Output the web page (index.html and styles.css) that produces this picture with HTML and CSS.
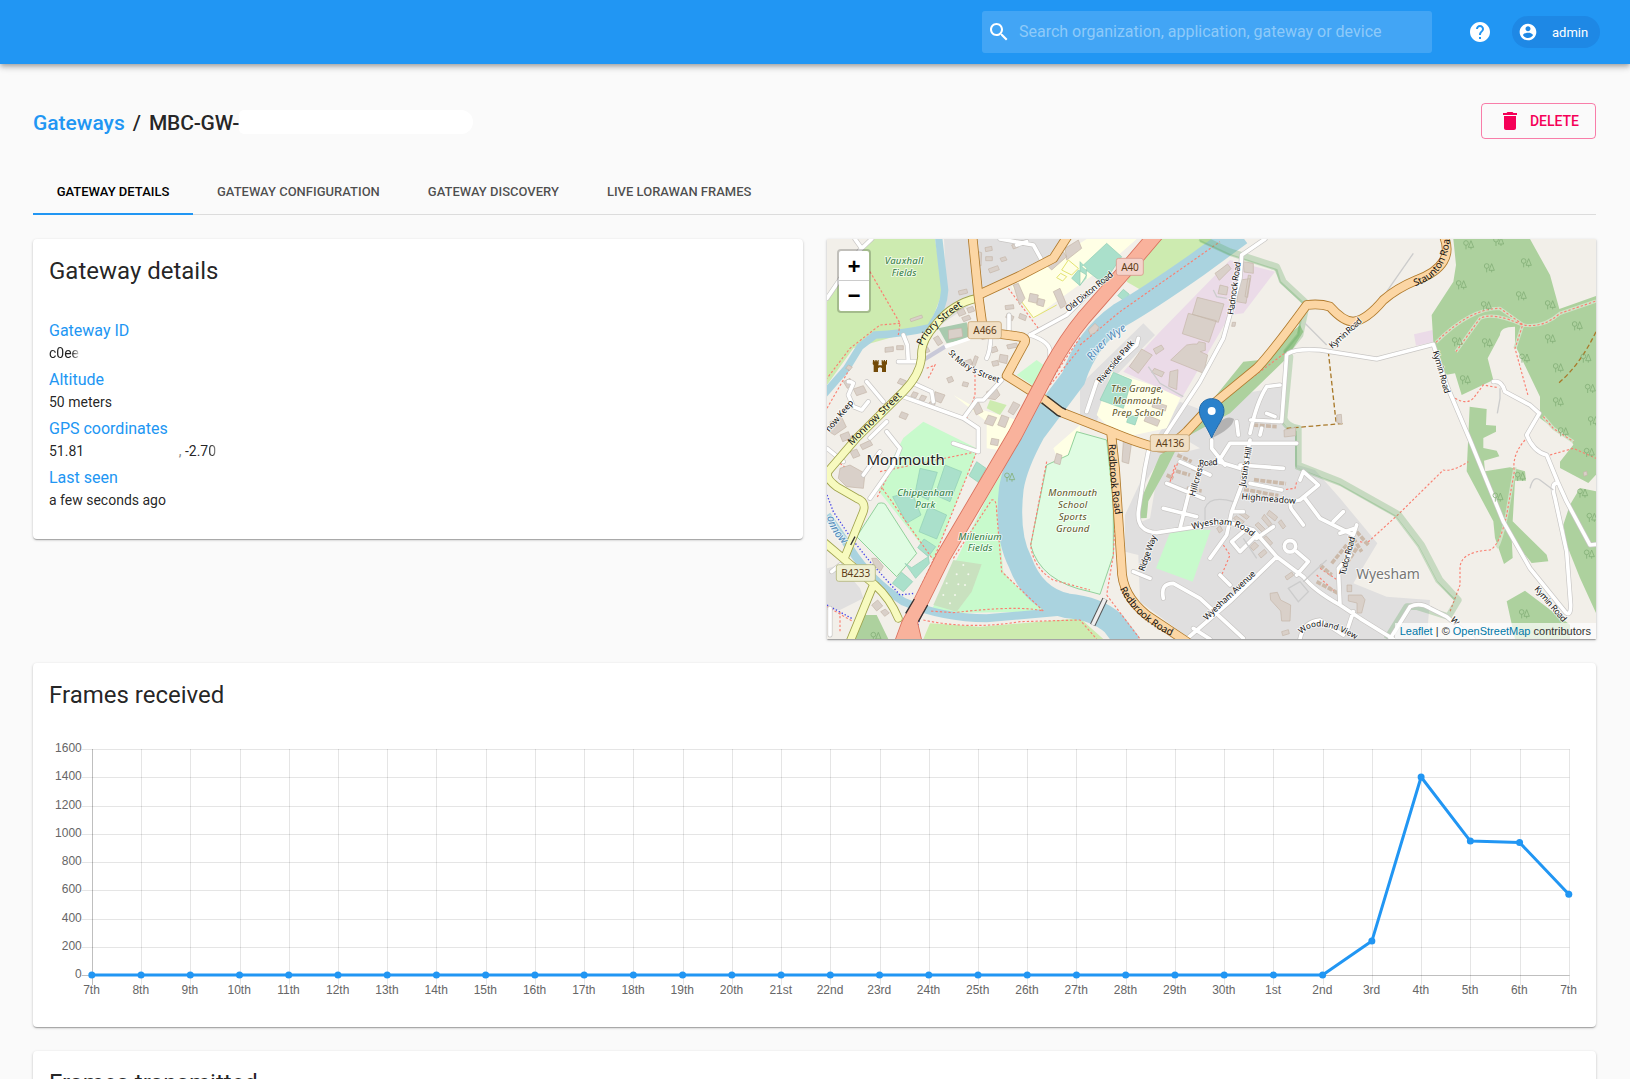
FILE: index.html
```html
<!DOCTYPE html>
<html lang="en">
<head>
<meta charset="utf-8">
<title>Gateway details</title>
<link rel="stylesheet" href="styles.css">
</head>
<body>
<header class="appbar">
  <div class="search">
    <svg class="icon" viewBox="0 0 24 24"><path d="M15.5 14h-.79l-.28-.27C15.41 12.59 16 11.11 16 9.5 16 5.91 13.09 3 9.5 3S3 5.91 3 9.5 5.91 16 9.5 16c1.61 0 3.09-.59 4.23-1.57l.27.28v.79l5 4.99L20.49 19l-4.99-5zm-6 0C7.01 14 5 11.99 5 9.5S7.01 5 9.5 5 14 7.01 14 9.5 11.99 14 9.5 14z"/></svg>
    <span class="search-hint">Search organization, application, gateway or device</span>
  </div>
  <svg class="icon help" viewBox="0 0 24 24"><path d="M12 2C6.48 2 2 6.48 2 12s4.48 10 10 10 10-4.48 10-10S17.52 2 12 2zm1 17h-2v-2h2v2zm2.07-7.75l-.9.92C13.45 12.9 13 13.5 13 15h-2v-.5c0-1.1.45-2.1 1.17-2.83l1.24-1.26c.37-.36.59-.86.59-1.41 0-1.1-.9-2-2-2s-2 .9-2 2H8c0-2.21 1.79-4 4-4s4 1.79 4 4c0 .88-.36 1.68-.93 2.25z"/></svg>
  <div class="chip">
    <svg class="avatar" viewBox="0 0 24 24"><path d="M12 2C6.48 2 2 6.48 2 12s4.48 10 10 10 10-4.48 10-10S17.52 2 12 2zm0 3c1.66 0 3 1.34 3 3s-1.34 3-3 3-3-1.34-3-3 1.34-3 3-3zm0 14.2c-2.5 0-4.71-1.28-6-3.22.03-1.99 4-3.08 6-3.08 1.99 0 5.97 1.09 6 3.08-1.29 1.94-3.5 3.22-6 3.22z"/></svg>
    <span>admin</span>
  </div>
</header>

<main class="page">
  <div class="titlebar">
    <h1 class="breadcrumb"><a class="crumb-link">Gateways</a><span class="crumb-sep">/</span><span class="crumb-name">MBC-GW-</span><span class="redacted"></span></h1>
    <button class="delete"><svg class="icon" viewBox="0 0 24 24"><path d="M6 19c0 1.1.9 2 2 2h8c1.1 0 2-.9 2-2V7H6v12zM19 4h-3.500l-1-1h-5l-1 1H5v2h14V4z"/></svg><span>DELETE</span></button>
  </div>

  <nav class="tabs">
    <a class="tab active">GATEWAY DETAILS</a>
    <a class="tab">GATEWAY CONFIGURATION</a>
    <a class="tab">GATEWAY DISCOVERY</a>
    <a class="tab">LIVE LORAWAN FRAMES</a>
  </nav>

  <div class="columns">
    <section class="card details">
      <h2 class="card-title">Gateway details</h2>
      <dl class="facts">
        <dt>Gateway ID</dt><dd><span class="cut">c0ee</span></dd>
        <dt>Altitude</dt><dd>50 meters</dd>
        <dt>GPS coordinates</dt><dd>51.81<span class="gap"></span><span class="faint">,</span> -2.7<span class="cut-digit">0</span></dd>
        <dt>Last seen</dt><dd>a few seconds ago</dd>
      </dl>
    </section>

    <section class="card map">
      <svg class="map-canvas" viewBox="21 12 2307 1200">
        <defs>
          <g id="trees" fill="none" stroke="#84b078" stroke-width="2.500"><circle cx="8" cy="9" r="7"/><path d="M8 16V28M23 2L15 22H31ZM23 22V28"/></g>
          <path id="priory" d="M307 333Q325 285 425 215"/>
          <path id="monnow-st" d="M95 632L245 485"/>
          <path id="stmary" d="M384 353Q430 415 560 450"/>
          <path id="wye" d="M816 378Q855 318 960 262"/>
          <path id="monnow-r" d="M21 845Q30 900 90 945"/>
          <path id="redbrook1" d="M866 627Q870 760 890 860"/>
          <path id="redbrook2" d="M899 1062Q950 1160 1066 1208"/>
          <path id="staunton" d="M1785 154Q1890 120 1890 -10"/>
          <path id="wyesham-rd" d="M1118 884Q1230 845 1294 904"/>
          <path id="woodland" d="M1444 1198Q1490 1145 1604 1212"/>
          <path id="highmeadow" d="M1264 793L1440 808"/>
        </defs>

        <g class="land">
          <path fill="#e0dfdf" d="M372 12H745L690 70L480 190L330 290L380 180ZM970 265L1005 300L870 440L830 560L780 540V450ZM21 1000L60 990L120 1060L130 1090L60 1125H21ZM21 200L70 60L21 60ZM1080 500L1160 530L1300 470L1390 455L1390 570L1430 600L1432 690L1485 705L1560 790L1672 925L1600 1045L1700 1085L1830 1095L1820 1212H1110L960 1100L955 960L915 950L915 840L980 700L1000 620Z"/>
          <path fill="#f2efe9" d="M1020 670L990 850L960 862L965 760ZM1020 600L1090 610L1140 640L1080 655Z"/>
          <path fill="#cdebb0" d="M155 12H345L370 165L330 270L240 300L100 340L21 450V195L60 120ZM975 12H1205L985 178L920 140ZM330 1165L480 1175L780 1150L850 1212H310ZM510 495L560 510L540 540L500 520Z"/>
          <path fill="#f2efe9" d="M21 12H150L110 70L60 125L21 200Z"/>
          <path fill="#c8facc" d="M250 609L310 560L470 640L465 665L340 975L170 760ZM545 715L540 900L550 1010Q600 1070 680 1130L330 1135L500 790ZM590 420L650 375L670 390L645 455ZM1055 880L1172 885L1118 1040L1008 1000ZM265 615L290 580L420 620L380 650Z"/>
          <path fill="#ffffe5" d="M575 155L800 12H950L850 100L790 140L640 250ZM875 410L1085 480L1040 580L900 609L830 540ZM400 480L470 520L610 560L570 650L500 640L500 560ZM700 640L780 570V609L720 690ZM262 1200L290 1190L300 1212H262Z"/>
          <path fill="#ebdbe8" d="M1230 75L1365 110L1270 235L1230 240L1085 490L910 410L1020 290ZM1782 298L1838 285L1845 320L1788 332Z"/>
          <path fill="#dffce2" stroke="#7fc98b" stroke-width="2.500" d="M175 805Q195 800 200 815L290 955L230 1025L110 905ZM770 590L745 660L680 690L632 930Q660 1040 810 1070L840 1078L880 960V800L860 615Z"/>
          <path fill="#add19e" d="M1900 12H2130L2190 120L2218 222L2328 183V680L2250 615L2160 550V485L2085 330V275Q2040 275 2040 300L2003 370L2020 435L1925 480L1905 415L1875 420L1840 320L1835 240L1900 140L1908 90ZM1949 515L2000 522L1998 570L2028 572V590L1990 609V639L2030 647L2038 664L1992 677L1995 709L2070 697L2115 709L2118 737H2085L2078 859L2180 959L2185 979L2135 984L2075 909L2078 969L2052 987L2025 909L2020 859L1940 709ZM2115 1067L2250 1169V1212H2085L2060 1099ZM2250 609L2328 670V719L2305 744L2220 699V680L2260 629ZM2280 759L2328 769V1134L2280 1029L2240 929L2230 869L2250 809ZM1050 640L1020 660L965 789L960 850L980 849L985 799L1040 700L1070 640ZM1250 405L1270 380L1320 375L1440 270L1450 290L1400 370L1230 535L1110 600L1100 590ZM110 1190L130 1140H170L205 1212H105Z"/>
          <path fill="#a9caae" d="M355 280L440 262L450 310L380 325Z"/>
          <path fill="#c9e1bf" d="M400 975L485 988L455 1070L410 1130L340 1110Z"/>
          <path class="pitch" d="M300 700L352 712L325 795L285 775ZM375 690L425 710L390 800L345 780ZM218 785L275 770L303 840L260 865ZM325 815L380 840L350 912L297 890ZM470 680L498 700L475 742L447 722ZM312 912L347 935L325 965L293 938ZM255 985L275 998L325 965L328 985L287 1030ZM245 1012L278 1040L250 1070L217 1045ZM775 105L800 120L780 152L755 130ZM860 25L905 65L850 145L785 95ZM800 100L780 80V150L798 130ZM880 412L935 435L910 520L840 495ZM910 163L928 178L912 197L893 182ZM925 545L955 540L945 570L920 562Z"/>
          <path fill="none" stroke="#e3e36f" stroke-width="3" d="M725 105L745 75L775 100L755 120ZM722 115L740 125L728 138L710 128ZM590 180L640 248L710 210"/>
        </g>

        <g class="water">
          <path stroke-width="22" d="M355 0L374 165Q372 220 330 278Q240 298 165 300L120 335L80 400L10 480"/>
          <path stroke-width="24" d="M21 840L90 940Q150 1035 250 1100Q370 1150 500 1150L720 1130"/>
          <path stroke-width="74" d="M1260 -5L1130 90Q980 195 900 240Q800 310 760 430L640 590Q585 690 574 760Q558 900 600 980Q640 1090 740 1112Q830 1120 880 1165L930 1230"/>
        </g>

        <g class="paths">
          <path d="M150 110L240 265L235 300M240 265L180 270L90 340L21 430M21 520L90 400M565 160L655 280L630 300M780 330L900 230L1200 20M690 450L780 340M780 308L690 440M465 420V480L440 550M180 750L340 975M180 710L470 650L340 975L300 1060M210 710L170 790M400 970L515 795Q530 790 530 830L545 1010L670 1128Q600 1110 400 1133L330 1128M310 1155Q450 1185 600 1160L780 1155L830 1212M680 680L632 930Q640 1000 700 1035L810 1065M885 860L880 960L860 1080M860 1080L960 1212M60 1130V1190M21 1115L100 1160M60 685L130 740M320 400L345 390L325 430M1200 500L1400 350M1065 690L1050 740L1075 680M1210 930L1230 960L1205 1020M1385 765L1425 760L1430 740M1490 1020L1550 1075M1500 1000L1560 1040M1620 920L1640 925L1735 838L1870 705Q1900 710 1945 680"/>
          <path class="halo" d="M1848 322Q1950 220 2040 220L2110 270Q2170 280 2220 235L2328 198M1908 350L1980 250Q2020 230 2108 270L2085 340M2085 697L2060 840Q2040 930 2030 937M2170 545L2200 580L2260 620"/>
          <path d="M1848 322Q1950 220 2040 220L2110 270Q2170 280 2220 235L2328 198M1908 350L1980 250Q2020 230 2108 270L2085 340L2125 485M1905 490Q1940 510 1960 490L1990 450L2035 458M2115 615Q2075 660 2083 710L2060 840Q2040 930 2010 945Q1920 950 1920 1000V1050L1890 1130M2190 660L2260 640L2328 670M2170 545L2200 580L2260 620"/>
        </g>
        <g class="boundary">
          <path stroke-width="20" d="M1140 8L1230 50L1370 95L1390 140L1460 205L1440 300L1400 350L1410 365L1392 550Q1400 575 1435 580V690L1560 740L1735 838L1805 930L1860 1035L1915 1095L1885 1145L1790 1115H1760L1700 1212"/>
          <path stroke-width="6" d="M1140 18L1230 60L1370 105L1380 140L1450 205L1435 300L1395 350L1400 365L1382 550Q1390 585 1428 590V700L1560 750L1725 843L1795 935L1850 1040L1905 1095"/>
        </g>
        <path fill="none" stroke="#a9792a" stroke-width="4" stroke-dasharray="14 8" d="M1525 350L1548 560M1400 580L1575 565M2328 290Q2280 390 2215 445"/>
        <path fill="none" stroke="#4242e8" stroke-width="4" stroke-dasharray="4 6" d="M21 780L40 830L90 905L150 980L240 1080L285 1075M21 1110L95 1150M290 1180L300 1150"/>

        <path class="building" d="M475 50l10 3-2 40-10-3ZM495 38l20-4 2 12-20 4ZM497 65l20 0v12l-20 0ZM540 70l16-5 5 10-16 5ZM575 30l16-6 5 12-16 6ZM415 168l25-6 3 12-25 6ZM505 102l28-10 5 12-28 10ZM270 252l35-12 3 8-35 12ZM580 150l15-5 20 45-16 20ZM700 170l20-10 20 50-18 10ZM630 175l25 5-5 25-25-6ZM655 190l20 5-5 20-20-6ZM680 90l50-40 10 15-45 40ZM735 40l40-25 10 25-45 35ZM562 235l20 10-5 12-20-10ZM555 212l25-3 2 12-25 3ZM600 235l20 8-4 14-20-8ZM410 228l20-8 8 16-20 8ZM440 220l18-6 6 14-18 6ZM425 248l22-8 6 12-22 8ZM195 338l25-3v14l-25 3ZM230 332l20 0v12l-20 0ZM340 310l14-8 14 22-14 8ZM385 285l40-6 3 26-42 8ZM310 340l12-5 8 14-12 5ZM430 380l22-8 6 14-22 8ZM465 362l10 4-10 28-10-4ZM510 340l18-6 6 14-18 6ZM540 358l24 4-4 24-24-6ZM515 380l18-4 4 14-18 4ZM560 330l30-6 4 12-30 6ZM480 300l20-5 6 14-20 5ZM85 390l12 6-8 10-12-6ZM70 440l20-10 12 20-20 10ZM100 462l30-10 10 20-30 10ZM30 560l35-14 14 30-35 24-14-8ZM245 530l20 8-8 16-20-8ZM60 600l25-10 8 20-25 10ZM280 470l15 5-8 14-15-5ZM305 480l15 5-8 14-15-5ZM330 500l16 6-8 12-16-6ZM345 470l30 10-12 24-20-8ZM455 510l20-10 14 30-20 10ZM500 470l28-12 12 22-14 14-26-4ZM505 540l25 8-12 25-25-8ZM545 540l22 8-12 30-22-8ZM580 500l20 10-20 30-16-10ZM380 430l15-6 6 14-15 6ZM430 440l16 4-4 12-16-4ZM240 430l20 8-8 14-20-8ZM60 700l30-10 45 25-5 45-50-5-25-25ZM90 650l20-8 10 20-20 8ZM120 630l30-14 8 14-30 14ZM155 970l15 0 20 24-8 14-18-14ZM155 1110l18-15 15 18-18 15ZM182 1130l14-8 12 12-14 10ZM710 655l16 6-6 28-18-6ZM515 610l22 4-4 18-22-4ZM1185 115l38-28 10 14-35 35ZM1270 80l30 5 0 30-28-4ZM1260 135l30-4-12 74-28-5ZM1285 120l8 2-10 65-8-2ZM1200 150l24 6-4 24-26-4ZM1132 187l80 20-17 55-78-24ZM1105 235l84 22-22 65-80-26ZM1100 330l20-3 12 0 4-7 20 4 0 22-15 4 22 10-12 55-99-40ZM965 342l32 18-42 55-27-20ZM1000 342l24-12 8 12-24 16ZM1003 400l30 12-8 14-30-14ZM1050 410l24-6-4 60-24-10ZM805 285l20-20 12 12-10 15-16 8ZM1237 262l10 0-2 12-10 0ZM980 540l40 16-8 18-40-16ZM1000 500l40 12-4 16-40-12ZM910 620l24 8-8 58-20-6ZM1392 585l35-8 0 25-34 4ZM1350 1075L1372 1072L1382 1095L1412 1110L1410 1158H1385L1382 1128L1352 1095ZM1550 540l14-2 2 30-16-6ZM2290 712l10-4 2 12-10 4ZM1585 1080l40 0 10 14-10 40-14 0 0-30-26-6ZM1581 1050l14 0 0 20-14 0ZM1395 1025l20-14 6 10-20 14ZM1385 1190l20-6 3 12-20 6ZM1340 838l8-12 25 20-8 12ZM1325 850l8-12 22 28-8 10ZM1305 870l10-8 24 24-8 10ZM1240 850l8-8 25 18-8 8ZM1255 835l8-8 25 18-8 8ZM1375 862l8-8 14 20-8 8ZM1330 910l8-8 20 22-8 8ZM1290 935l14-14 12 12-16 14ZM1315 958l18-15 8 10-18 16ZM1190 880l10-8 8 14-10 8Z"/>
        <path class="terraces" d="M1302 734L1398 746M1272 763L1375 782M1072 660L1115 680M1068 708L1110 720M1115 700L1145 710M1100 760L1145 768M1040 720L1060 730M1300 570L1370 575M1490 1040L1555 1075M1500 990L1535 1020M1535 985L1580 930M1570 1000L1610 940M1610 890L1645 930M1600 910L1625 950"/>

        <g class="way minor-case"><use href="#minor-roads"/></g>
        <g class="way minor"><g id="minor-roads">
          <path d="M155 12L120 45L21 190M105 12L125 40M540 12L640 30L665 75M590 30L620 20M567 240V295M630 300L740 240L810 170M630 300Q690 320 690 350V385M500 370Q510 350 512 310M235 380H300M265 380L262 330L250 300M85 440Q95 440 100 445L85 480L100 515L125 525L145 500M140 440L190 500M250 485L430 550L470 495H490L545 435M430 550L475 580V650L400 625M280 445L335 470L340 500M200 590L240 640L220 690L150 790M130 720L180 650M21 640L70 680M150 609L200 560"/>
          <path d="M1335 12L1265 60L1260 130L1210 310L1140 440L1035 600M955 310L950 330L830 440L800 530M1405 355Q1430 340 1500 345L1670 372L1840 328L1880 450L1950 615L2050 860L2130 1000L2235 1130Q2252 1148 2252 1110L2240 950L2205 790Q2190 740 2215 745L2240 800L2310 930L2330 928M2215 745L2180 660Q2140 650 2120 600L2158 535L2130 510L2055 470Q2045 435 2020 440M1400 360L1385 560M1380 450L1340 455Q1310 500 1290 595M1292 555L1380 560M1325 580L1320 600M1340 535L1365 545M1250 560L1255 600"/>
          <path d="M985 650L975 700L955 830Q950 890 1010 893L1130 875L1220 860L1300 885L1370 965L1450 1025Q1480 1065 1560 1110M1215 690L1175 640V615M1195 680L1230 625H1430M1195 680L1260 700M1260 690L1390 700M1290 615L1265 750L1235 830L1220 900L1170 970M1080 680L1170 720M1040 745L1150 790M1110 760L1080 880M1030 820L1130 845M1290 745L1385 765M1240 830L1270 830M1450 710L1440 735M1450 710L1495 750L1440 795Q1395 800 1420 830L1450 870M1455 790L1500 850M1270 890L1235 920L1260 950L1310 900M1310 910L1360 875M1370 965L1230 1100L1100 1212M1430 950L1465 980L1430 1020M1200 1020L1230 1050M1030 1090Q1020 1045 1060 1045L1140 1090L1270 1210M940 1010L990 1030M1500 850L1560 880L1600 900L1610 870M1540 860L1570 830M1560 1110L1555 1000L1590 960M1560 1110L1620 1150L1720 1212M1600 1130L1580 1190M1710 1212L1770 1115Q1800 1100 1830 1120L1880 1145L1960 1212M1440 1212Q1450 1160 1500 1155L1570 1200M1560 895L1605 880M1120 1180L1170 1212M30 1120V1200M35 1010L60 990"/>
          <circle cx="1410" cy="934" r="17"/>
        </g></g>
        <path fill="none" stroke="#c9c9d8" stroke-width="13" d="M310 375L375 335"/>
        <path fill="none" stroke="#fff" stroke-width="11" d="M375 335L450 310"/>
        <path fill="none" stroke="#ccc" stroke-width="4" d="M1155 860V820Q1170 780 1240 800M1780 55L1700 170M2130 760Q2140 720 2160 735L2200 765M2040 460V490L2032 535M1455 265L1520 330M985 395L1020 445L1090 485M1180 165L1190 185L1220 190M1405 1060L1440 1040L1465 1070L1435 1100ZM1270 910L1310 970M1450 1040L1520 975"/>

        <g class="way tertiary-case"><use href="#tertiary"/></g>
        <g class="way tertiary"><path id="tertiary" d="M470 190Q400 205 350 265Q300 320 305 365Q300 420 250 470L110 609L28 705Q10 725 50 755L110 790Q140 800 130 830L75 965M10 920L75 975L165 1050Q210 1090 235 1150M160 1050L90 1220"/></g>
        <g class="way primary-case"><use href="#primary"/></g>
        <g class="way primary"><path id="primary" d="M457 0L475 180L490 290L600 305Q625 310 610 330L560 422L660 485L720 530L860 585Q990 640 1030 638Q1070 620 1100 590L1170 515L1310 400Q1350 360 1460 210Q1500 205 1530 215Q1570 260 1600 260Q1640 255 1690 195Q1730 160 1790 135Q1910 90 1870 0M475 180L600 122L700 70L745 0M873 590L885 700L905 1000Q905 1080 980 1140L1100 1220"/></g>
        <g class="way trunk-case"><use href="#trunk"/></g>
        <g class="way trunk"><path id="trunk" d="M1015 -10L930 90L790 250Q740 310 690 400L585 600L370 965L300 1105L265 1170L245 1225M270 1160L285 1225"/></g>
        <path fill="none" stroke="#333" stroke-width="4" d="M665 503L712 541L722 545M682 484L727 518L738 524M283 1092L257 1135M323 1110L295 1160M105 905L92 930"/>
        <path fill="none" stroke="#555" stroke-width="17" d="M818 1170L855 1092"/><path fill="none" stroke="#eee" stroke-width="11" d="M818 1170L855 1092"/>

        <g class="trees">
          <use href="#trees" x="1930" y="15"/><use href="#trees" x="2020" y="5"/><use href="#trees" x="1992" y="84"/><use href="#trees" x="2103" y="69"/><use href="#trees" x="1908" y="135"/><use href="#trees" x="2088" y="168"/><use href="#trees" x="2175" y="195"/><use href="#trees" x="1983" y="198"/><use href="#trees" x="2256" y="258"/><use href="#trees" x="2175" y="297"/><use href="#trees" x="1896" y="306"/><use href="#trees" x="1986" y="309"/><use href="#trees" x="2098" y="355"/><use href="#trees" x="2282" y="355"/><use href="#trees" x="2199" y="384"/><use href="#trees" x="1920" y="420"/><use href="#trees" x="2295" y="446"/><use href="#trees" x="2199" y="486"/><use href="#trees" x="2304" y="543"/><use href="#trees" x="2214" y="576"/><use href="#trees" x="2292" y="638"/><use href="#trees" x="2085" y="710"/><use href="#trees" x="2018" y="772"/><use href="#trees" x="2272" y="760"/><use href="#trees" x="2300" y="833"/><use href="#trees" x="2292" y="943"/><use href="#trees" x="2097" y="1122"/><use href="#trees" x="553" y="712"/><use href="#trees" x="152" y="1190"/>
        </g>
        <g fill="#f4f8ee"><circle cx="430" cy="990" r="3"/><circle cx="410" cy="1018" r="3"/><circle cx="445" cy="1018" r="3"/><circle cx="380" cy="1045" r="3"/><circle cx="415" cy="1048" r="3"/><circle cx="370" cy="1080" r="3"/><circle cx="405" cy="1080" r="3"/><circle cx="435" cy="1050" r="3"/><circle cx="390" cy="1105" r="3"/></g>
        <path fill="#734a08" d="M159 375h4v4h3v-4h4v4h3v-4h3v12l-2 4h13l-2-4v-12h3v4h3v-4h4v4h3v-4h3v12l-3 4v20h-12v-11q-6-7-12 0v11h-13v-20l-3-4Z"/>

        <g class="shields">
          <rect x="444" y="260" width="100" height="51" rx="7"/><text x="495" y="297" textLength="70">A466</text>
          <rect class="trunk-shield" x="889" y="70" width="81" height="51" rx="7"/><text x="930" y="108" textLength="53">A40</text>
          <rect x="991" y="599" width="117" height="50" rx="7"/><text x="1050" y="635" textLength="86">A4136</text>
          <rect class="b-shield" x="49" y="989" width="117" height="50" rx="7"/><text x="107" y="1026" textLength="87">B4233</text>
        </g>

        <g class="labels">
          <text class="town" x="257" y="690" textLength="235">Monmouth</text>
          <text class="suburb" x="1704" y="1032" textLength="191">Wyesham</text>
          <g class="park"><text x="252" y="87" textLength="115">Vauxhall</text><text x="252" y="122" textLength="74">Fields</text><text x="316" y="784" textLength="168">Chippenham</text><text x="316" y="819" textLength="60">Park</text><text x="480" y="914" textLength="130">Millenium</text><text x="480" y="949" textLength="74">Fields</text></g>
          <g class="school"><text x="952" y="472" textLength="158">The Grange,</text><text x="952" y="508" textLength="146">Monmouth</text><text x="953" y="544" textLength="154">Prep School</text><text x="758" y="784" textLength="146">Monmouth</text><text x="758" y="820" textLength="88">School</text><text x="758" y="856" textLength="84">Sports</text><text x="758" y="892" textLength="100">Ground</text></g>
          <g class="river"><text><textPath href="#wye">River Wye</textPath></text><text><textPath href="#monnow-r">onnow</textPath></text></g>
          <g class="street major"><text><textPath href="#priory">Priory Street</textPath></text><text><textPath href="#monnow-st">Monnow Street</textPath></text><text><textPath href="#redbrook1">Redbrook Road</textPath></text><text><textPath href="#redbrook2">Redbrook Road</textPath></text><text><textPath href="#staunton">Staunton Road</textPath></text></g>
          <g class="street"><text class="tight"><textPath href="#stmary">St Mary's Street</textPath></text><text><textPath href="#wyesham-rd">Wyesham Road</textPath></text><text class="tight"><textPath href="#woodland">Woodland View</textPath></text><text><textPath href="#highmeadow">Highmeadow</textPath></text>
            <text transform="translate(745 232) rotate(-39)" textLength="175">Old Dixton Road</text>
            <text transform="translate(842 446) rotate(-50)" textLength="158">Riverside Park</text>
            <text transform="translate(1240 240) rotate(-82)" textLength="160">Hadnock Road</text>
            <text transform="translate(1537 342) rotate(-42)" textLength="122">Kymin Road</text>
            <text transform="translate(1838 350) rotate(74)" textLength="132">Kymin Road</text>
            <text transform="translate(2142 1063) rotate(49)" textLength="132">Kymin Road</text>
            <text transform="translate(28 592) rotate(-50)" textLength="115">now Keep</text>
            <text transform="translate(1124 785) rotate(-74)" textLength="97">Hillcrest</text>
            <text transform="translate(1138 694) rotate(-5)" textLength="56">Road</text>
            <text transform="translate(1275 755) rotate(-80)" textLength="120">Justin's Hill</text>
            <text transform="translate(972 1010) rotate(-70)" textLength="112">Ridge Way</text>
            <text transform="translate(1160 1157) rotate(-43)" textLength="203">Wyesham Avenue</text>
            <text transform="translate(1575 1022) rotate(-75)" textLength="118">Tudor Road</text>
            <text transform="translate(1890 1155) rotate(50)">W</text>
          </g>
        </g>
        <path fill="#000" opacity=".2" d="M1178 608L1200 560Q1225 540 1242 552Q1238 580 1178 608Z"/>
        <path fill="#2a81cb" stroke="#2268a5" stroke-width="3" d="M1175 491C1152 491 1138 508 1138 528C1138 550 1157 568 1175 609C1193 568 1212 550 1212 528C1212 508 1198 491 1175 491Z"/>
        <circle cx="1175" cy="528" r="12" fill="#fff"/>
      </svg>
      <div class="zoom"><span>+</span><span>−</span></div>
      <div class="credit"><a>Leaflet</a> | © <a>OpenStreetMap</a> contributors</div>
    </section>
  </div>

  <section class="card frames">
    <h2 class="card-title">Frames received</h2>
    <svg class="chart" id="received" width="1531" height="270"></svg>
  </section>

  <section class="card frames">
    <h2 class="card-title">Frames transmitted</h2>
  </section>
</main>
<script src="chart.js"></script>
</body>
</html>
```
FILE: styles.css
```css
* { box-sizing: border-box; }
html, body { height: 1079px; overflow: hidden; }
body { margin: 0; background: #fafafa; color: rgba(0,0,0,.87); font-family: Roboto, sans-serif; font-size: 14px; }
h1, h2, dl, dd { margin: 0; }

.icon { width: 24px; height: 24px; fill: currentColor; flex: none; }

.appbar { position: relative; display: flex; align-items: center; justify-content: flex-end; height: 64px; padding-right: 30px; background: #2196f3; color: #fff; box-shadow: 0 2px 4px -1px rgba(0,0,0,.2), 0 4px 5px 0 rgba(0,0,0,.14), 0 1px 10px 0 rgba(0,0,0,.12); }
.search { display: flex; align-items: center; width: 450px; height: 42px; padding-left: 5px; border-radius: 3px; background: #42a5f5; }
.search-hint { margin-left: 8px; padding-bottom: 2px; font-size: 16px; color: #8ecaf9; white-space: nowrap; }
.help { margin: 0 20px 0 36px; }
.chip { display: flex; align-items: center; width: 88px; height: 32px; padding-left: 5.5px; border-radius: 16px; background: #1e88e5; font-size: 13px; }
.avatar { width: 20px; height: 20px; margin-right: 14.5px; fill: #fff; }

.page { padding: 39px 34px 0 33px; }
.titlebar { display: flex; justify-content: space-between; height: 64px; }
.breadcrumb { display: flex; align-items: center; height: 39px; font-size: 21px; font-weight: 500; }
.crumb-link { color: #2196f3; }
.crumb-sep { margin: 0 8px; }
.crumb-name { letter-spacing: -.2px; }
.redacted { width: 234px; height: 24px; margin-top: -2px; border-radius: 5px 12px 12px 5px; background: #fff; }
.delete { display: flex; align-items: center; justify-content: center; width: 115px; height: 36px; padding: 0; border: 1px solid rgba(245,0,87,.5); border-radius: 4px; background: none; color: #f50057; font: 500 14px Roboto, sans-serif; gap: 8px; }

.tabs { display: flex; height: 48px; border-bottom: 1px solid #dcdcdc; }
.tab { display: flex; align-items: center; justify-content: center; height: 48px; padding: 1px 24px 0; font-size: 13px; font-weight: 500; color: rgba(0,0,0,.7); white-space: nowrap; }
.tab.active { width: 160px; padding: 3px 0 0; color: #000; border-bottom: 2px solid #2196f3; }

.columns { display: grid; grid-template-columns: 770px 769px; gap: 24px; align-items: start; margin-top: 24px; }
.card { border-radius: 4px; background: #fff; box-shadow: 0 1px 3px 0 rgba(0,0,0,.2), 0 1px 1px 0 rgba(0,0,0,.14), 0 2px 1px -1px rgba(0,0,0,.12); }
.card-title { height: 64px; padding: 16px; font-size: 24px; line-height: 32px; font-weight: 400; }
.details { height: 300px; }
.facts { padding: 15px 16px; }
.facts dt { font-size: 16px; line-height: 26px; color: #2196f3; }
.facts dd { height: 23px; line-height: 19px; }
.cut { background: linear-gradient(90deg, #212121 75%, #888 90%, #ddd); background-clip: text; color: transparent; }
.cut-digit { background: linear-gradient(90deg, #333 50%, #999); background-clip: text; color: transparent; }
.gap { display: inline-block; width: 94.5px; }
.faint { color: #888; }

.map { position: relative; height: 400px; overflow: hidden; border-radius: 0; background: #f2efe9; }
.map-canvas { display: block; width: 769px; height: 400px; }
.zoom { position: absolute; left: 10px; top: 10px; width: 34px; border: 2px solid rgba(0,0,0,.2); border-radius: 4px; background: #fff; background-clip: padding-box; font: bold 22px "Liberation Mono", monospace; color: #000; text-align: center; }
.zoom span { display: block; height: 30px; line-height: 33px; }
.zoom span:first-child { line-height: 35px; border-bottom: 1px solid #ccc; }
.credit { position: absolute; right: 0; bottom: 0; padding: 0 5px; background: rgba(255,255,255,.7); color: #333; font: 11px/16px "Liberation Sans", Arial, sans-serif; white-space: nowrap; }
.credit a { color: #0078a8; }

.pitch { fill: #aae0cb; stroke: #8fcdb4; stroke-width: 2; }
.water path { fill: none; stroke: #aad3df; }
.paths path { fill: none; stroke: #fa8072; stroke-width: 3.5; stroke-dasharray: 7 6; }
.paths .halo { stroke: #cfe3c6; stroke-width: 10; stroke-dasharray: none; }
.boundary path { fill: none; stroke: #5aa55a; stroke-opacity: .28; stroke-linejoin: round; }
.building { fill: #d9d0c9; stroke: #c4b5a8; stroke-width: 2; }
.terraces { fill: none; stroke: #cbb9a9; stroke-width: 11; stroke-dasharray: 15 4; }

.way { fill: none; stroke-linecap: round; stroke-linejoin: round; }
.minor-case { stroke: #c8c6c4; stroke-width: 15; }
.minor { stroke: #fff; stroke-width: 11; }
.tertiary-case { stroke: #9fa24c; stroke-width: 26; }
.tertiary { stroke: #f7fabf; stroke-width: 21; }
.primary-case { stroke: #b07a2c; stroke-width: 29; }
.primary { stroke: #fcd6a4; stroke-width: 24; }
.trunk-case { stroke: #d9705c; stroke-width: 46; }
.trunk { stroke: #f9b29c; stroke-width: 41; }

.shields rect { fill: #f1dfc4; stroke: #c9a87a; stroke-width: 2.5; }
.shields .trunk-shield { fill: #f4d3cb; stroke: #d89a8d; }
.shields .b-shield { fill: #eff0d3; stroke: #b5b77d; }
.shields text { font-size: 30px; fill: #5d3c17; text-anchor: middle; }
.map-canvas text { font-family: "Noto Sans", sans-serif; }
.labels text { paint-order: stroke; stroke: rgba(255,255,255,.65); stroke-width: 6px; stroke-linejoin: round; }
.town { font-size: 45px; fill: #222; text-anchor: middle; }
.suburb { font-size: 42px; fill: #777; text-anchor: middle; }
.park text, .school text { font-size: 29px; font-style: italic; text-anchor: middle; }
.park { fill: #2f7a42; }
.school { fill: #5b531d; }
.river { font-size: 33px; font-style: italic; fill: #4f88b8; }
.street { font-size: 26px; fill: #111; }
.street .tight { font-size: 24.5px; }
.street.major { font-size: 29.5px; }
.street.major text { stroke: none; }

.frames { height: 364px; margin-top: 24px; overflow: hidden; }
.chart { display: block; margin: 0 16px; }
.chart text { font: 12px "Liberation Sans", Arial, sans-serif; fill: #666; }
.chart .grid { stroke: rgba(0,0,0,.1); }
.chart .axis { stroke: rgba(0,0,0,.25); }
.chart .line { fill: none; stroke: #2196f3; stroke-width: 3; stroke-linejoin: round; }
.chart circle { fill: #2196f3; }
```
FILE: chart.js
```js
const NS = 'http://www.w3.org/2000/svg';
const svg = document.getElementById('received');
const days = ['7th','8th','9th','10th','11th','12th','13th','14th','15th','16th','17th','18th','19th','20th','21st','22nd','23rd','24th','25th','26th','27th','28th','29th','30th','1st','2nd','3rd','4th','5th','6th','7th'];
const counts = days.map(() => 0);
counts.splice(26, 5, 240, 1402, 948, 938, 572);
const left = 42.8, right = 1519.8, top0 = 22, bottom = 248;
const px = i => left + (right - left) * i / (days.length - 1);
const py = v => bottom - (bottom - top0) * v / 1600;

function add(tag, attrs, text) {
  const el = document.createElementNS(NS, tag);
  for (const k in attrs) el.setAttribute(k, attrs[k]);
  if (text !== undefined) el.textContent = text;
  svg.appendChild(el);
}
for (let v = 0; v <= 1600; v += 200) {
  const y = Math.round(py(v)) + 0.5;
  add('path', { class: v ? 'grid' : 'grid axis', d: `M${left - 10} ${y}H${right + 0.7}` });
  add('text', { x: left - 10, y: y + 2.5, 'text-anchor': 'end' }, v);
}
days.forEach((d, i) => {
  const x = Math.round(px(i)) + 0.5;
  add('path', { class: i ? 'grid' : 'grid axis', d: `M${x} ${top0}V${bottom + 10}` });
  add('text', { x: px(i) - 0.3, y: bottom + 19, 'text-anchor': 'middle' }, d);
});
add('polyline', { class: 'line', points: counts.map((v, i) => `${px(i)},${py(v)}`).join(' ') });
counts.forEach((v, i) => add('circle', { cx: px(i), cy: py(v), r: 3.5 }));
```
